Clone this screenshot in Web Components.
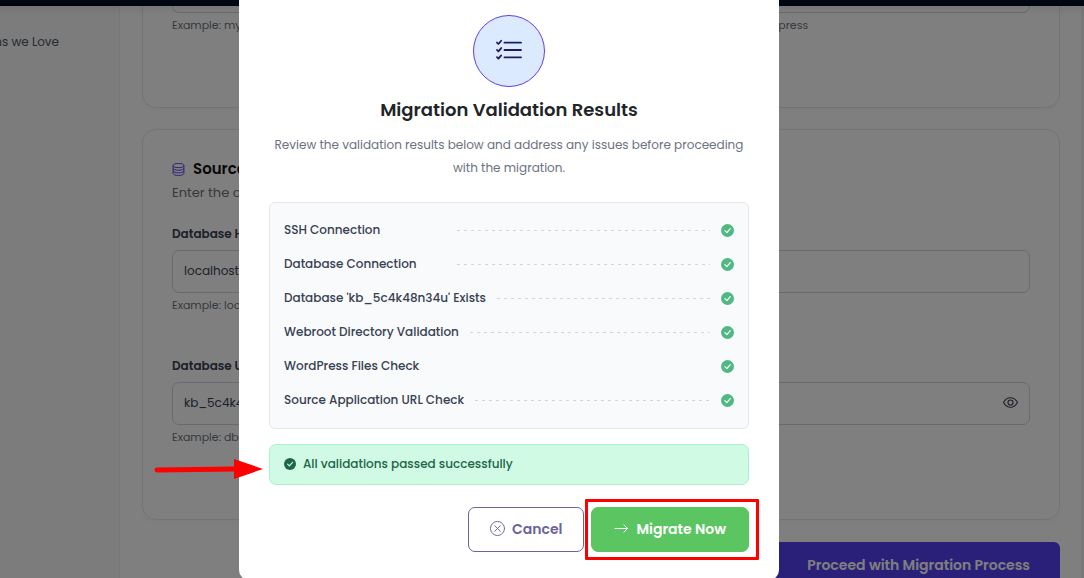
<!DOCTYPE html>
<html lang="en">
<head>
<meta charset="utf-8">
<meta name="viewport" content="width=device-width, initial-scale=1">
<title>Migration Validation Results</title>
<style>
  html, body { margin: 0; height: 100%; overflow: hidden; }
  body { font-family: Poppins, Inter, sans-serif; background: #fff; color: #374151; }
</style>
</head>
<body>
<migration-app></migration-app>
<script>
const define = (name, html, setup) => {
  const tpl = document.createElement('template');
  tpl.innerHTML = html;
  customElements.define(name, class extends HTMLElement {
    constructor() {
      super();
      this.attachShadow({ mode: 'open' }).append(tpl.content.cloneNode(true));
    }
    connectedCallback() { if (setup) setup(this, this.shadowRoot); }
  });
};

const ICONS = {
  checklist: '<g fill="none" stroke="currentColor" stroke-linecap="round" stroke-linejoin="round"><path stroke-width="1.1" d="M5.2 3.5h10.2M5.2 8h10.2M5.2 12.5h10.2"/><path stroke-width="1.1" d="M.6 3.4l.9.9 1.7-2M.6 7.9l.9.9 1.7-2M.6 12.4l.9.9 1.7-2"/></g>',
  check: '<circle cx="8" cy="8" r="8" fill="currentColor"/><path d="M4.8 8.2l2.4 2.4 4.2-4.9" fill="none" stroke="var(--mark,#fff)" stroke-width="1.5" stroke-linecap="round" stroke-linejoin="round"/>',
  cross: '<g fill="none" stroke="currentColor" stroke-linecap="round"><circle cx="8" cy="8" r="7.5"/><path d="M5 5l6 6M11 5l-6 6"/></g>',
  arrow: '<path d="M1 8h13.5M10.5 4l4 4-4 4" fill="none" stroke="currentColor" stroke-linecap="round" stroke-linejoin="round"/>',
  eye: '<g fill="none" stroke="currentColor" stroke-width="1.2"><path d="M.6 8S3.300 2.900 8 2.900 15.400 8 15.400 8 12.700 13.100 8 13.100.6 8 .6 8z"/><circle cx="8" cy="8" r="2.700"/></g>',
  database: '<g fill="none" stroke="currentColor" stroke-width="1.2"><ellipse cx="8" cy="3.100" rx="6.600" ry="2.500"/><path d="M1.400 3.100v9.800c0 1.400 3 2.500 6.600 2.500s6.600-1.100 6.600-2.500V3.100M1.400 6.400c0 1.400 3 2.500 6.600 2.500s6.600-1.100 6.600-2.500M1.400 9.600c0 1.400 3 2.500 6.600 2.500s6.600-1.100 6.600-2.500"/></g>'
};

define('ui-icon', `
  <style>
    :host { display: inline-flex; flex: none; width: 16px; height: 16px; }
    svg { width: 100%; height: 100%; display: block; overflow: visible; }
  </style>
  <svg viewBox="0 0 16 16" aria-hidden="true"></svg>`,
  (el, root) => { root.querySelector('svg').innerHTML = ICONS[el.getAttribute('name')]; });

define('top-bar', `
  <style>
    :host { display: block; height: 6px; background: #000a24; position: relative; z-index: 1; box-shadow: 0 2px 10px #0002; }
  </style>`);

define('side-nav', `
  <style>
    :host { display: block; flex: none; width: 185px; background: #f9f9f9; border-right: 1px solid #f0f0f0; }
    a { display: block; padding: 26px 60px 0 0; font-size: 12px; line-height: 20px; text-align: right; white-space: nowrap; color: #4b5563; text-decoration: none; }
  </style>
  <nav><a href="#"><slot></slot></a></nav>`);

define('form-card', `
  <style>
    :host { display: block; border: 1px solid #e5e7eb; border-radius: 14px; padding: 29px 29px 74px; background: #fff; box-shadow: 0 2px 8px #00000008; }
    ::slotted(*) { margin: 0; }
  </style>
  <slot></slot>`);

define('form-field', `
  <style>
    :host { display: block; min-width: 0; }
    label { display: block; font-size: 12px; line-height: 20px; font-weight: 600; margin-bottom: 6px; color: #374151; }
    label:empty { display: none; }
    .box { display: flex; align-items: center; box-sizing: border-box; height: 43px; border: 1px solid #d1d5db; border-radius: 7px; padding: 0 11px 2px; }
    input { flex: 1; min-width: 0; border: 0; padding: 0; outline: 0; background: none; font: 12px/20px Poppins, Inter, sans-serif; color: #374151; }
    small { display: block; margin-top: 4px; font-size: 11px; line-height: 16px; color: #6b7280; }
    button { display: none; border: 0; background: none; padding: 0; color: #374151; }
    :host([reveal]) button { display: flex; }
    button ui-icon { width: 15px; height: 15px; }
  </style>
  <label for="field"></label>
  <div class="box"><input id="field"><button aria-label="Show value"><ui-icon name="eye"></ui-icon></button></div>
  <small></small>`,
  (el, root) => {
    root.querySelector('label').textContent = el.getAttribute('label') || '';
    root.querySelector('small').textContent = el.getAttribute('hint') || '';
    const input = root.querySelector('input');
    input.value = el.getAttribute('value') || '';
    if (el.hasAttribute('name')) input.setAttribute('aria-label', el.getAttribute('name'));
  });

define('migration-form', `
  <style>
    :host { display: block; flex: 1; min-width: 0; padding: 0 21px 0 22px; margin-top: -66px; border-right: 3px solid #f2f2f2; background: #fff; }
    .grid { display: grid; grid-template-columns: 1fr 1fr; column-gap: 14px; row-gap: 43px; }
    form-card + form-card { margin-top: 21px; }
    h2 { display: flex; align-items: center; gap: 8px; margin: 0; font-size: 15px; line-height: 20px; font-weight: 600; color: #111; }
    h2 ui-icon { width: 13px; height: 13px; color: #5b3df5; }
    p { margin: 4px 0 21px; font-size: 13px; line-height: 20px; color: #6b7280; }
    .actions { display: flex; justify-content: flex-end; margin-top: 22px; }
    .actions button { border: 0; border-radius: 6px; height: 44px; padding: 1px 30px 0 70px; background: #5640f2; color: #fff; font: 600 14px/20px Poppins, Inter, sans-serif; }
  </style>
  <form-card>
    <div class="grid">
      <form-field name="Domain" hint="Example: myapp.example.com"></form-field>
      <form-field name="Webroot" hint="Example: /var/www/html/wordpress"></form-field>
    </div>
  </form-card>
  <form-card>
    <div>
      <h2><ui-icon name="database"></ui-icon>Source Database</h2>
      <p>Enter the database details</p>
      <div class="grid">
        <form-field label="Database Host" value="localhost" hint="Example: localhost"></form-field>
        <form-field label="Database Name" hint="Example: db_name"></form-field>
        <form-field label="Database User" value="kb_5c4k48n34u" hint="Example: db_user"></form-field>
        <form-field label="Database Password" reveal></form-field>
      </div>
    </div>
  </form-card>
  <div class="actions"><button>Proceed with Migration Process</button></div>`);

define('check-row', `
  <style>
    :host { display: flex; align-items: center; gap: 11px; height: 34px; font-size: 12px; line-height: 20px; font-weight: 500; color: #374151; }
    span { min-width: 162px; white-space: nowrap; }
    i { flex: 1; height: 1px; background: repeating-linear-gradient(90deg, #d1d5db 0 3px, transparent 3px 7px); }
    :host([plain]) i { background: none; }
    ui-icon { width: 13px; height: 13px; color: #50b883; }
  </style>
  <span><slot></slot></span><i></i><ui-icon name="check"></ui-icon>`);

define('action-button', `
  <style>
    :host { display: block; position: relative; }
    button { display: flex; align-items: center; gap: 7px; height: 45px; box-sizing: border-box; padding: 0 21px 2px; border: 1px solid #6b639a; border-radius: 7px; background: #fff; color: #6b639a; font: 600 14px/20px Poppins, Inter, sans-serif; white-space: nowrap; }
    ui-icon { width: 15px; height: 15px; }
    :host([primary]) button { border-color: #5bc562; background: #5bc562; color: #fff; padding: 0 22px 2px; }
  </style>
  <button><ui-icon></ui-icon><slot></slot></button><slot name="mark"></slot>`,
  (el, root) => {
    const icon = document.createElement('ui-icon');
    icon.setAttribute('name', el.getAttribute('icon'));
    root.querySelector('ui-icon').replaceWith(icon);
  });

define('status-alert', `
  <style>
    :host { display: flex; align-items: center; gap: 7px; box-sizing: border-box; height: 41px; padding: 0 14px 2px; border: 1px solid #a7f3d0; border-radius: 7px; background: #d1fae5; color: #206548; font-size: 12px; line-height: 20px; font-weight: 500; position: relative; }
    ui-icon { width: 12px; height: 12px; --mark: #d1fae5; }
  </style>
  <ui-icon name="check"></ui-icon><span><slot></slot></span><slot name="mark"></slot>`);

define('validation-modal', `
  <style>
    :host { position: absolute; inset: 0; display: flex; justify-content: center; align-items: flex-start; background: #00000080; z-index: 2; }
    section { box-sizing: border-box; width: 540px; max-width: 100%; margin-top: -15px; padding: 30px 30px 28px; border-radius: 10px; background: #fff; text-align: center; }
    .badge { display: inline-flex; align-items: center; justify-content: center; box-sizing: border-box; width: 72px; height: 72px; padding-bottom: 3px; border: 1px solid #5b3df5; border-radius: 50%; background: #dbeafe; color: #231a5c; vertical-align: top; }
    .badge ui-icon { width: 26px; height: 26px; }
    h1 { margin: 9px 0; font-size: 18px; line-height: 28px; font-weight: 600; color: #212529; }
    p { margin: 0; font-size: 12px; line-height: 23px; color: #6b7280; }
    .checks { text-align: left; margin: 23px 0 15px; padding: 10px 14px 11px; border: 1px solid #e5e7eb; border-radius: 6px; background: #f9fafb; }
    .actions { display: flex; justify-content: flex-end; gap: 7px; margin-top: 22px; }
    .pointer { position: absolute; left: -117px; top: 12px; width: 110px; height: 22px; }
    .frame { position: absolute; inset: -8px -10px -8px -6px; border: 3px solid #f00; border-radius: 1px; pointer-events: none; }
  </style>
  <section role="dialog" aria-modal="true" aria-labelledby="title">
    <div class="badge"><ui-icon name="checklist"></ui-icon></div>
    <h1 id="title">Migration Validation Results</h1>
    <p>Review the validation results below and address any issues before proceeding<br>with the migration.</p>
    <div class="checks">
      <check-row>SSH Connection</check-row>
      <check-row>Database Connection</check-row>
      <check-row>Database 'kb_5c4k48n34u' Exists</check-row>
      <check-row>Webroot Directory Validation</check-row>
      <check-row plain>WordPress Files Check</check-row>
      <check-row>Source Application URL Check</check-row>
    </div>
    <status-alert>All validations passed successfully
      <svg slot="mark" class="pointer" viewBox="0 0 110 22" aria-hidden="true"><path d="M4 13L82 12" stroke="#f00" stroke-width="5" stroke-linecap="round"/><path d="M81 2L110 12 81 22z" fill="#f00"/></svg>
    </status-alert>
    <div class="actions">
      <action-button icon="cross">Cancel</action-button>
      <action-button icon="arrow" primary>Migrate Now<div slot="mark" class="frame"></div></action-button>
    </div>
  </section>`);

define('migration-app', `
  <style>
    :host { display: flex; flex-direction: column; position: relative; margin-left: -66px; height: 100vh; }
    .body { display: flex; flex: 1; align-items: stretch; min-height: 0; }
  </style>
  <top-bar></top-bar>
  <div class="body">
    <side-nav>Integrations we Love</side-nav>
    <migration-form></migration-form>
  </div>
  <validation-modal></validation-modal>`);
</script>
</body>
</html>
